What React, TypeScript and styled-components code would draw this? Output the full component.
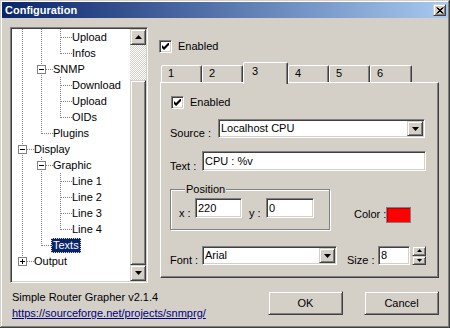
import React from 'react'
import styled, { createGlobalStyle, css } from 'styled-components'

const face = '#d4d0c8'

const GlobalStyle = createGlobalStyle`
  html, body { margin: 0; padding: 0; }
  body {
    background: ${face};
    font-family: "Liberation Sans", Arial, sans-serif;
    font-size: 11px;
    color: #000;
  }
`

const raised = css`
  box-sizing: border-box;
  border: 1px solid;
  border-color: ${face} #404040 #404040 ${face};
  box-shadow: inset 1px 1px #fff, inset -1px -1px #808080;
  background: ${face};
`

const sunken = css`
  box-sizing: border-box;
  border: 1px solid;
  border-color: #808080 #fff #fff #808080;
  box-shadow: inset 1px 1px #404040, inset -1px -1px ${face};
  background: #fff;
`

const Window = styled.div`
  box-sizing: border-box;
  width: 450px;
  height: 328px;
  padding: 2px;
  background: ${face};
  box-shadow: inset -1px -1px #404040, inset 1px 1px ${face}, inset -2px -2px #808080, inset 2px 2px #fff;
  display: flex;
  flex-direction: column;
`

const TitleBar = styled.div`
  height: 16px;
  display: flex;
  align-items: center;
  padding-left: 3px;
  background: linear-gradient(to right, #0a246a, #a6caf0);
  color: #fff;
  font-weight: bold;
`

const CloseButton = styled.div`
  ${raised};
  margin-left: auto;
  margin-right: 2px;
  width: 13px;
  height: 12px;
  display: flex;
  align-items: center;
  justify-content: center;
`

const Main = styled.div`
  display: flex;
  align-items: flex-start;
  padding: 9px 0 0 8px;
`

/* ---------- tree ---------- */

const TreeBox = styled.div`
  ${sunken};
  width: 138px;
  height: 256px;
  padding: 1px;
  display: flex;
  overflow: hidden;
`

const TreeList = styled.div`
  flex: 1;
  display: flex;
  flex-direction: column;
`

const TreeRow = styled.div`
  height: 16px;
  display: flex;
  align-items: center;
`

type Guide = 'pipe' | 'tee' | 'corner'

const dotsV = 'repeating-linear-gradient(to bottom, #808080 0 1px, transparent 1px 2px)'
const dotsH = 'repeating-linear-gradient(to right, #808080 0 1px, transparent 1px 2px)'

const GuideCell = styled.span<{ $kind: Guide }>`
  position: relative;
  flex: none;
  width: 19px;
  height: 16px;
  &::before {
    content: '';
    position: absolute;
    left: 10px;
    top: 0;
    width: 1px;
    height: ${p => (p.$kind === 'corner' ? 9 : 16)}px;
    background: ${dotsV};
  }
  &::after {
    content: '';
    display: ${p => (p.$kind === 'pipe' ? 'none' : 'block')};
    position: absolute;
    left: 11px;
    top: 8px;
    width: 11px;
    height: 1px;
    background: ${dotsH};
  }
`

const ExpanderBox = styled.svg`
  position: absolute;
  left: 6px;
  top: 4px;
  z-index: 1;
`

const NodeLabel = styled.span<{ $selected?: boolean }>`
  margin-left: 1px;
  padding: 1px 2px;
  line-height: 13px;
  white-space: nowrap;
  ${p =>
    p.$selected &&
    css`
      background: #0a246a;
      color: #fff;
      outline: 1px dotted #e8e4a0;
      outline-offset: -1px;
    `}
`

const ScrollBar = styled.div`
  flex: none;
  width: 16px;
  display: flex;
  flex-direction: column;
`

const ScrollButton = styled.div`
  ${raised};
  flex: none;
  width: 16px;
  height: 16px;
  display: flex;
  align-items: center;
  justify-content: center;
`

const Track = styled.div<{ $h: number }>`
  flex: none;
  height: ${p => p.$h}px;
  background: repeating-conic-gradient(#fff 0 25%, ${face} 0 50%) 0 0 / 2px 2px;
`

const Thumb = styled.div`
  ${raised};
  flex: 1;
`

/* ---------- right side ---------- */

const RightCol = styled.div`
  margin-left: 11px;
  display: flex;
  flex-direction: column;
`

const CheckRow = styled.label<{ $mt?: number; $ml?: number }>`
  display: flex;
  align-items: center;
  gap: 6px;
  margin-top: ${p => p.$mt ?? 0}px;
  margin-left: ${p => p.$ml ?? 0}px;
  height: 13px;
  line-height: 13px;
`

const CheckBox = styled.span`
  ${sunken};
  width: 13px;
  height: 13px;
  flex: none;
  display: flex;
  align-items: center;
  justify-content: center;
`

const TabStrip = styled.div`
  display: flex;
  align-items: flex-end;
  height: 20px;
  margin: 9px 0 0 2px;
`

const Tab = styled.div<{ $w: number; $active?: boolean }>`
  box-sizing: border-box;
  width: ${p => p.$w}px;
  height: ${p => (p.$active ? 22 : 17)}px;
  margin-bottom: ${p => (p.$active ? -2 : 0)}px;
  position: relative;
  z-index: ${p => (p.$active ? 2 : 0)};
  background: ${face};
  border: 1px solid;
  border-bottom: none;
  border-color: #fff #404040 transparent #fff;
  border-radius: 2px 2px 0 0;
  box-shadow: inset -1px 0 #808080;
  padding: ${p => (p.$active ? '2px 0 0 8px' : '1px 0 0 6px')};
  line-height: 13px;
`

const Panel = styled.div`
  box-sizing: border-box;
  width: 279px;
  height: 196px;
  margin-left: 1px;
  border: 1px solid;
  border-color: #fff #404040 #404040 #fff;
  box-shadow: inset -1px -1px #808080;
  padding: 13px 0 0 9px;
  display: flex;
  flex-direction: column;
`

const FieldRow = styled.div<{ $mt: number; $top?: boolean }>`
  display: flex;
  align-items: ${p => (p.$top ? 'flex-start' : 'flex-end')};
  margin-top: ${p => p.$mt}px;
`

const Label = styled.span<{ $w: number; $ml?: number }>`
  flex: none;
  width: ${p => p.$w}px;
  margin-left: ${p => p.$ml ?? 0}px;
  margin-bottom: -2px;
  line-height: 13px;
  white-space: nowrap;
`

const Edit = styled.div<{ $w: number; $h?: number }>`
  ${sunken};
  flex: none;
  width: ${p => p.$w}px;
  height: ${p => p.$h ?? 20}px;
  padding: 1px;
  display: flex;
  align-items: center;
`

const FieldText = styled.span`
  flex: 1;
  padding-left: 1px;
  line-height: 13px;
  white-space: nowrap;
`

const DropButton = styled.span`
  ${raised};
  flex: none;
  width: 16px;
  height: 100%;
  display: flex;
  align-items: center;
  justify-content: center;
`

const Group = styled.fieldset`
  box-sizing: border-box;
  width: 160px;
  margin: 0;
  padding: 2px 0 11px 8px;
  border: 1px solid #808080;
  box-shadow: inset 1px 1px #fff, 1px 1px #fff;
  display: flex;
  align-items: flex-end;
`

const Legend = styled.legend`
  margin-left: 6px;
  padding: 0 1px;
  line-height: 13px;
  background: ${face};
`

const ColorPick = styled.div`
  display: flex;
  align-items: center;
  margin: 24px 0 0 24px;
`

const ColorLabel = styled.span`
  width: 32px;
  line-height: 13px;
  margin-top: -2px;
  white-space: nowrap;
`

const Swatch = styled.span`
  box-sizing: border-box;
  width: 25px;
  height: 16px;
  background: #f00;
  border: 1px solid #808080;
  box-shadow: inset 1px 1px #c00000;
`

const Spinner = styled.div`
  flex: none;
  width: 14px;
  height: 19px;
  margin-left: 2px;
  display: flex;
  flex-direction: column;
`

const SpinHalf = styled.span`
  ${raised};
  flex: 1;
  display: flex;
  align-items: center;
  justify-content: center;
`

/* ---------- footer ---------- */

const Footer = styled.div`
  display: flex;
  align-items: flex-start;
  padding: 0 9px 0 10px;
`

const Info = styled.div`
  margin-top: 6px;
  line-height: 16px;
  display: flex;
  flex-direction: column;
`

const Link = styled.a`
  color: #000080;
  text-decoration: underline;
`

const Buttons = styled.div`
  margin: 8px 0 0 auto;
  display: flex;
  gap: 21px;
`

const Button = styled.button`
  ${raised};
  width: 75px;
  height: 24px;
  padding: 0;
  font: inherit;
  color: #000;
`

/* ---------- drawings ---------- */

const Arrow = ({ dir, w = 7 }: { dir: 'up' | 'down'; w?: number }) => {
  const h = Math.ceil(w / 2)
  const pts = dir === 'down' ? `0,0 ${w},0 ${w / 2},${h}` : `0,${h} ${w},${h} ${w / 2},0`
  return (
    <svg width={w} height={h} viewBox={`0 0 ${w} ${h}`}>
      <polygon points={pts} fill="#000" />
    </svg>
  )
}

const Check = () => (
  <svg width="7" height="7" viewBox="0 0 7 7">
    <polygon points="0,2 2,4 7,-1 7,2 2,7 0,5" fill="#000" />
  </svg>
)

const Expander = ({ plus }: { plus?: boolean }) => (
  <ExpanderBox width="9" height="9" viewBox="0 0 9 9">
    <rect x="0.5" y="0.5" width="8" height="8" fill="#fff" stroke="#808080" />
    <path d="M2 4.5h5" stroke="#000" />
    {plus && <path d="M4.5 2v5" stroke="#000" />}
  </ExpanderBox>
)

interface TreeNode {
  label: string
  guides: Guide[]
  expander?: '+' | '-'
  selected?: boolean
}

const nodes: TreeNode[] = [
  { label: 'Upload', guides: ['pipe', 'pipe', 'tee'] },
  { label: 'Infos', guides: ['pipe', 'pipe', 'corner'] },
  { label: 'SNMP', guides: ['pipe', 'tee'], expander: '-' },
  { label: 'Download', guides: ['pipe', 'pipe', 'tee'] },
  { label: 'Upload', guides: ['pipe', 'pipe', 'tee'] },
  { label: 'OIDs', guides: ['pipe', 'pipe', 'corner'] },
  { label: 'Plugins', guides: ['pipe', 'corner'] },
  { label: 'Display', guides: ['tee'], expander: '-' },
  { label: 'Graphic', guides: ['pipe', 'tee'], expander: '-' },
  { label: 'Line 1', guides: ['pipe', 'pipe', 'tee'] },
  { label: 'Line 2', guides: ['pipe', 'pipe', 'tee'] },
  { label: 'Line 3', guides: ['pipe', 'pipe', 'tee'] },
  { label: 'Line 4', guides: ['pipe', 'pipe', 'corner'] },
  { label: 'Texts', guides: ['pipe', 'corner'], selected: true },
  { label: 'Output', guides: ['corner'], expander: '+' },
]

const tabs = [
  { label: '1', w: 41 },
  { label: '2', w: 41 },
  { label: '3', w: 45, active: true },
  { label: '4', w: 41 },
  { label: '5', w: 41 },
  { label: '6', w: 42 },
]

const App = () => {
  return (
    <>
      <GlobalStyle />
      <Window>
        <TitleBar>
          Configuration
          <CloseButton>
            <svg width="8" height="7" viewBox="0 0 8 7">
              <path d="M0.5 0.5l6 6M1.5 0.5l6 6M6.5 0.5l-6 6M7.5 0.5l-6 6" stroke="#000" strokeWidth="1" />
            </svg>
          </CloseButton>
        </TitleBar>

        <Main>
          <TreeBox>
            <TreeList>
              {nodes.map((n, i) => (
                <TreeRow key={i}>
                  {n.guides.map((g, j) => (
                    <GuideCell key={j} $kind={g}>
                      {j === n.guides.length - 1 && n.expander && <Expander plus={n.expander === '+'} />}
                    </GuideCell>
                  ))}
                  <NodeLabel $selected={n.selected}>{n.label}</NodeLabel>
                </TreeRow>
              ))}
            </TreeList>
            <ScrollBar>
              <ScrollButton>
                <Arrow dir="up" />
              </ScrollButton>
              <Track $h={35} />
              <Thumb />
              <ScrollButton>
                <Arrow dir="down" />
              </ScrollButton>
            </ScrollBar>
          </TreeBox>

          <RightCol>
            <CheckRow $mt={13}>
              <CheckBox>
                <Check />
              </CheckBox>
              Enabled
            </CheckRow>

            <TabStrip>
              {tabs.map(t => (
                <Tab key={t.label} $w={t.w} $active={t.active}>
                  {t.label}
                </Tab>
              ))}
            </TabStrip>

            <Panel>
              <CheckRow $ml={1}>
                <CheckBox>
                  <Check />
                </CheckBox>
                Enabled
              </CheckRow>

              <FieldRow $mt={10}>
                <Label $w={48}>Source :</Label>
                <Edit $w={207} $h={19}>
                  <FieldText>Localhost CPU</FieldText>
                  <DropButton>
                    <Arrow dir="down" />
                  </DropButton>
                </Edit>
              </FieldRow>

              <FieldRow $mt={13}>
                <Label $w={32}>Text :</Label>
                <Edit $w={224}>
                  <FieldText>CPU : %v</FieldText>
                </Edit>
              </FieldRow>

              <FieldRow $mt={12} $top>
                <Group>
                  <Legend>Position</Legend>
                  <Label $w={16}>x :</Label>
                  <Edit $w={47}>
                    <FieldText>220</FieldText>
                  </Edit>
                  <Label $w={17} $ml={7}>y :</Label>
                  <Edit $w={48}>
                    <FieldText>0</FieldText>
                  </Edit>
                </Group>
                <ColorPick>
                  <ColorLabel>Color :</ColorLabel>
                  <Swatch />
                </ColorPick>
              </FieldRow>

              <FieldRow $mt={16}>
                <Label $w={32}>Font :</Label>
                <Edit $w={135} $h={19}>
                  <FieldText>Arial</FieldText>
                  <DropButton>
                    <Arrow dir="down" />
                  </DropButton>
                </Edit>
                <Label $w={31} $ml={10}>Size :</Label>
                <Edit $w={32} $h={19}>
                  <FieldText>8</FieldText>
                </Edit>
                <Spinner>
                  <SpinHalf>
                    <Arrow dir="up" w={5} />
                  </SpinHalf>
                  <SpinHalf>
                    <Arrow dir="down" w={5} />
                  </SpinHalf>
                </Spinner>
              </FieldRow>
            </Panel>
          </RightCol>
        </Main>

        <Footer>
          <Info>
            <span>Simple Router Grapher v2.1.4</span>
            <Link href="#">https://sourceforge.net/projects/snmprg/</Link>
          </Info>
          <Buttons>
            <Button>OK</Button>
            <Button>Cancel</Button>
          </Buttons>
        </Footer>
      </Window>
    </>
  )
}

export default App
